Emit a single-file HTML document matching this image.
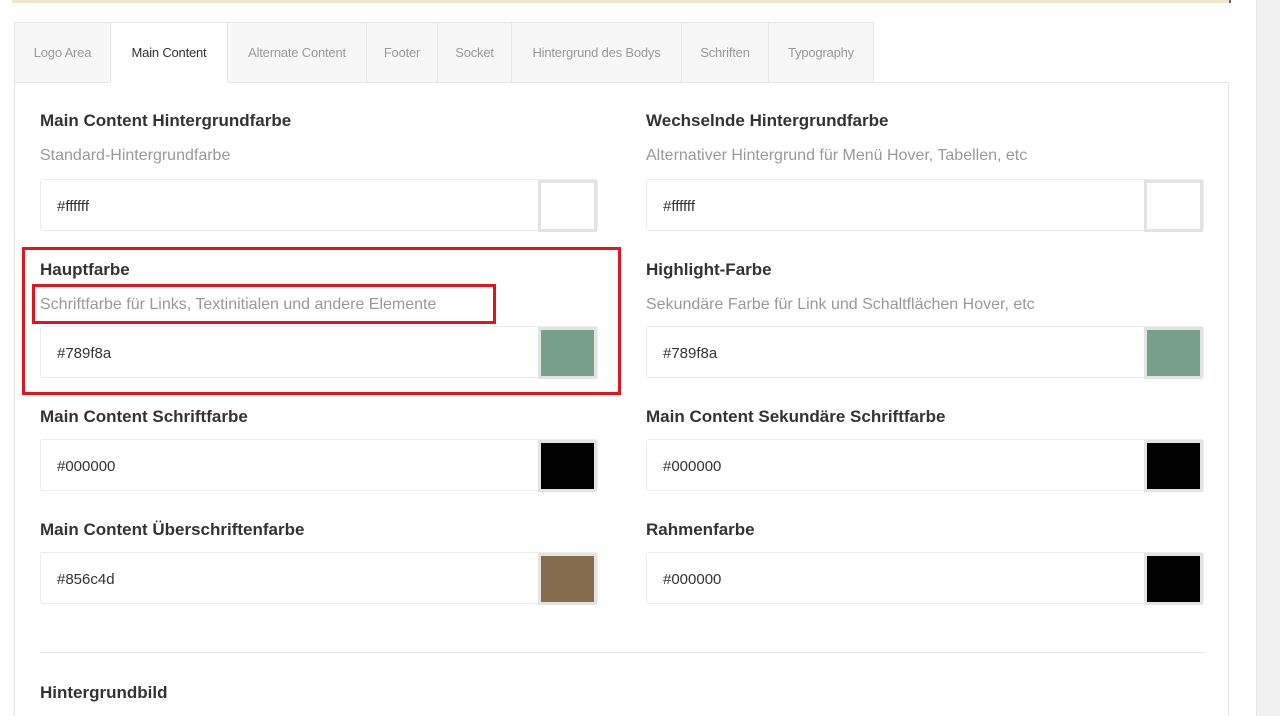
<!DOCTYPE html>
<html><head><meta charset="utf-8"><style>
*{box-sizing:border-box;margin:0;padding:0}
html,body{width:1280px;height:716px;overflow:hidden}
body{background:#fff;font-family:"Liberation Sans",sans-serif;position:relative}
.topbar{position:absolute;left:12px;top:0;width:1219px;height:3px;background:#f3e6c8;border-right:2px solid #666}
.side{position:absolute;left:1256px;top:0;width:24px;height:716px;background:#f0f0f0;border-left:1px solid #e6e6e6}
.tabs{position:absolute;left:14px;top:22px;height:61px;display:flex;border-top:1px solid #e5e5e5;border-left:1px solid #e5e5e5}
.tab{height:60px;line-height:60px;text-align:center;font-size:13px;color:#999;background:#f7f7f7;border-right:1px solid #e5e5e5;border-bottom:1px solid #e5e5e5;white-space:nowrap;letter-spacing:-0.2px}
.tab.act{background:#fff;color:#333;border-bottom:1px solid #fff}
.panel{position:absolute;left:14px;top:82px;width:1215px;height:640px;border:1px solid #e5e5e5;border-top:none}
.line{position:absolute;left:14px;top:82px;width:1215px;height:1px;background:#e5e5e5}
.f{position:absolute;width:558px}
.t{font-size:17px;font-weight:bold;color:#333;position:absolute;top:1px;white-space:nowrap}
.d{font-size:16px;color:#999;position:absolute;top:37px;white-space:nowrap}
.in{position:absolute;left:0;width:558px;height:52px;border:1px solid #ececec;border-radius:3px;font-size:15px;color:#333;padding-left:16px;line-height:54px}
.sw{position:absolute;right:0;top:0;width:59px;height:52px;border:3px solid #e3e3e3}
.red{position:absolute;border:3px solid #e4141e}
</style></head><body>
<div class="topbar"></div>
<div class="side"></div>
<div class="line"></div>
<div class="panel"></div>
<div class="tabs">
<div class="tab" style="width:96px">Logo Area</div><div class="tab act" style="width:117px">Main Content</div><div class="tab" style="width:139px">Alternate Content</div><div class="tab" style="width:71px">Footer</div><div class="tab" style="width:74px">Socket</div><div class="tab" style="width:170px">Hintergrund des Bodys</div><div class="tab" style="width:87px">Schriften</div><div class="tab" style="width:105px">Typography</div>
</div>

<div class="f" style="left:40px;top:110px"><div class="t">Main Content Hintergrundfarbe</div><div class="d">Standard-Hintergrundfarbe</div><div class="in" style="top:69px">#ffffff<div class="sw" style="background:#fff"></div></div></div>
<div class="f" style="left:646px;top:110px"><div class="t">Wechselnde Hintergrundfarbe</div><div class="d">Alternativer Hintergrund für Menü Hover, Tabellen, etc</div><div class="in" style="top:69px">#ffffff<div class="sw" style="background:#fff"></div></div></div>

<div class="f" style="left:40px;top:259px"><div class="t">Hauptfarbe</div><div class="d">Schriftfarbe für Links, Textinitialen und andere Elemente</div><div class="in" style="top:67px">#789f8a<div class="sw" style="background:#789f8a"></div></div></div>
<div class="f" style="left:646px;top:259px"><div class="t">Highlight-Farbe</div><div class="d">Sekundäre Farbe für Link und Schaltflächen Hover, etc</div><div class="in" style="top:67px">#789f8a<div class="sw" style="background:#789f8a"></div></div></div>

<div class="f" style="left:40px;top:406px"><div class="t">Main Content Schriftfarbe</div><div class="in" style="top:33px">#000000<div class="sw" style="background:#000"></div></div></div>
<div class="f" style="left:646px;top:406px"><div class="t">Main Content Sekundäre Schriftfarbe</div><div class="in" style="top:33px">#000000<div class="sw" style="background:#000"></div></div></div>

<div class="f" style="left:40px;top:519px"><div class="t">Main Content Überschriftenfarbe</div><div class="in" style="top:33px">#856c4d<div class="sw" style="background:#856c4d"></div></div></div>
<div class="f" style="left:646px;top:519px"><div class="t">Rahmenfarbe</div><div class="in" style="top:33px">#000000<div class="sw" style="background:#000"></div></div></div>

<div style="position:absolute;left:40px;top:652px;width:1164px;height:1px;background:#e5e5e5"></div>
<div class="f" style="left:40px;top:682px"><div class="t">Hintergrundbild</div></div>

<div class="red" style="left:22px;top:247px;width:599px;height:148px"></div>
<div class="red" style="left:32px;top:284px;width:464px;height:40px"></div>
</body></html>
